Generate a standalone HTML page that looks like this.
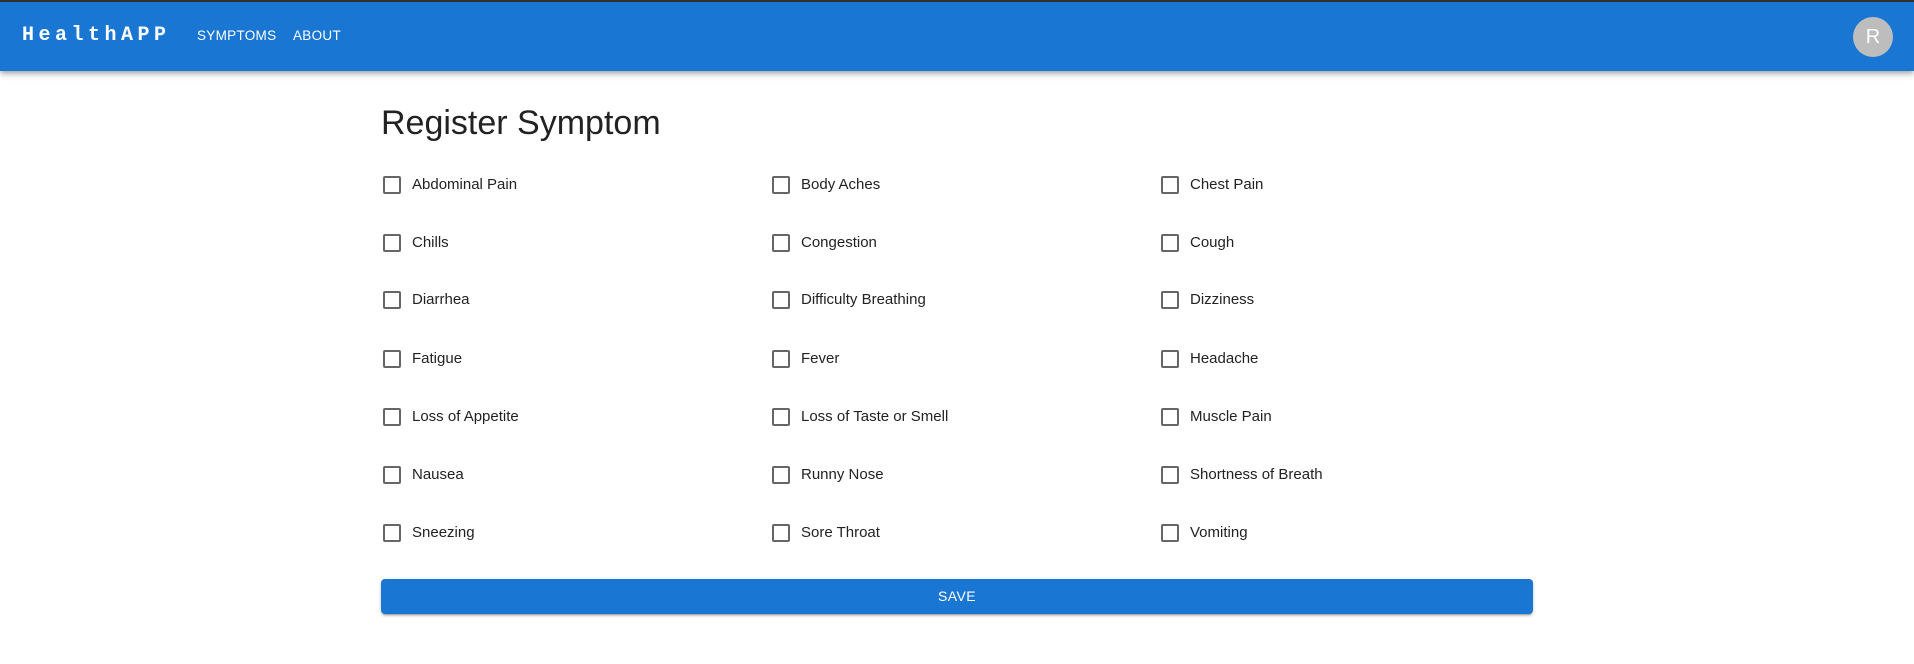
<!DOCTYPE html>
<html><head><style>
body{margin:0;width:1914px;height:664px;background:#fff;font-family:"Liberation Sans",Arial,sans-serif;position:relative;overflow:hidden}
.top{position:absolute;left:0;top:0;width:1914px;height:2px;background:#333}
.nav{position:absolute;left:0;top:2px;width:1914px;height:69px;background:#1976d2;box-shadow:0 2px 4px -1px rgba(0,0,0,.2),0 4px 5px 0 rgba(0,0,0,.14),0 1px 10px 0 rgba(0,0,0,.12)}
.logo{position:absolute;left:22px;top:22px;font-family:"Liberation Mono",monospace;font-weight:700;font-size:20px;letter-spacing:4.5px;color:#fff}
.nl{position:absolute;top:26px;color:#fff;font-size:13.5px;font-weight:500;letter-spacing:.3px}
.av{position:absolute;left:1853px;top:15px;width:40px;height:40px;border-radius:50%;background:#bdbdbd;color:#fff;font-size:20px;text-align:center;line-height:40px}
h1{position:absolute;left:381px;top:104px;margin:0;font-weight:400;font-size:34px;color:#222}
.cb{position:absolute;width:14px;height:14px;border:2px solid #666;border-radius:2px}
.lb{position:absolute;font-size:15px;color:#222}
.btn{position:absolute;left:381px;top:579px;width:1152px;height:35px;background:#1976d2;border-radius:4px;color:#fff;font-size:14px;font-weight:500;letter-spacing:.4px;text-align:center;line-height:35px;box-shadow:0 3px 1px -2px rgba(0,0,0,.2),0 2px 2px 0 rgba(0,0,0,.14),0 1px 5px 0 rgba(0,0,0,.12)}
</style></head><body>
<div class="top"></div>
<div class="nav">
<div class="logo">HealthAPP</div>
<div class="nl" style="left:197px">SYMPTOMS</div>
<div class="nl" style="left:293px">ABOUT</div>
<div class="av">R</div>
</div>
<h1>Register Symptom</h1>
<div id="g"></div>
<script>
var items=["Abdominal Pain","Body Aches","Chest Pain","Chills","Congestion","Cough","Diarrhea","Difficulty Breathing","Dizziness","Fatigue","Fever","Headache","Loss of Appetite","Loss of Taste or Smell","Muscle Pain","Nausea","Runny Nose","Shortness of Breath","Sneezing","Sore Throat","Vomiting"];
var ys=[185,243,300,359,417,475,533],xs=[383,772,1161],h="";
items.forEach(function(t,i){var r=Math.floor(i/3),c=i%3;h+='<div class="cb" style="left:'+xs[c]+'px;top:'+(ys[r]-9)+'px"></div><div class="lb" style="left:'+(xs[c]+29)+'px;top:'+(ys[r]-9)+'px">'+t+'</div>';});
document.getElementById("g").innerHTML=h;
</script>
<div class="btn">SAVE</div>
</body></html>
